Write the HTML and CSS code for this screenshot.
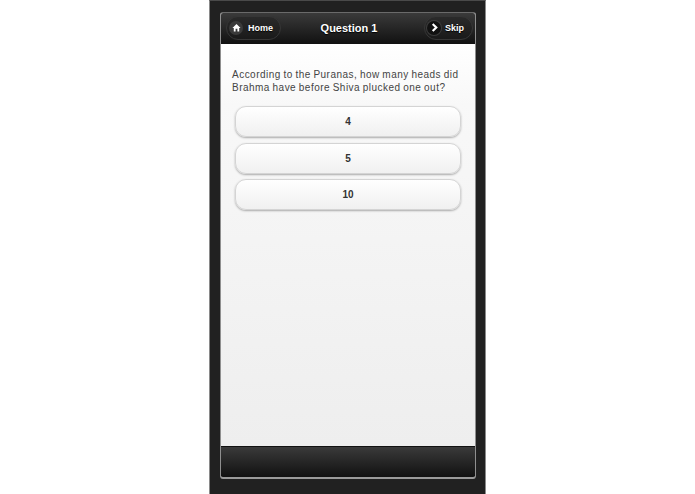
FILE: index.html
```html
<!DOCTYPE html>
<html lang="en">
<head>
<meta charset="utf-8">
<title>Question 1</title>
<link rel="stylesheet" href="styles.css">
</head>
<body>
<div class="device">
  <div class="screen">
    <header class="topbar">
      <a class="pill pill-home">
        <span class="pill-icon"><svg width="9" height="9" viewBox="0 0 10 10"><path d="M5 1 L9.5 5.5 H8 V9.5 H6 V6.5 H4 V9.5 H2 V5.5 H0.5 Z" fill="#fff"/></svg></span>
        <span>Home</span>
      </a>
      <h1 class="title">Question 1</h1>
      <a class="pill pill-skip">
        <span class="pill-icon pill-icon-dark"><svg width="9" height="9" viewBox="0 0 10 10"><path d="M3 1 L7 5 L3 9" fill="none" stroke="#fff" stroke-width="2.4"/></svg></span>
        <span>Skip</span>
      </a>
    </header>
    <main class="content">
      <p class="question">According to the Puranas, how many heads did Brahma have before Shiva plucked one out?</p>
      <div class="answers">
        <button class="answer">4</button>
        <button class="answer">5</button>
        <button class="answer">10</button>
      </div>
    </main>
    <footer class="bottombar"></footer>
  </div>
</div>
</body>
</html>
```
FILE: styles.css
```css
* { box-sizing: border-box; }
html, body { margin: 0; height: 100%; background: #fff; }
body { display: flex; justify-content: center; font-family: "Liberation Sans", Arial, sans-serif; overflow: hidden; }
.device {
  width: 277px; height: 494px;
  background: #212121;
  border-left: 1px solid #8a8a8a;
  border-right: 1px solid #8a8a8a;
  border-top: 1px solid #4a4a4a;
  padding: 11px 9px 15px 10px;
  display: flex;
}
.screen {
  flex: 1;
  display: flex; flex-direction: column;
  border: 1px solid #8f8f8f;
  border-top-color: #6a6a6a;
  border-bottom: 2px solid #9a9a9a;
  border-radius: 3px;
  overflow: hidden;
  background: #f0f0f0;
}
.topbar {
  height: 31px; flex: none;
  display: flex; align-items: center; justify-content: space-between;
  padding: 0 2px 2px 5px;
  background: linear-gradient(#3a3a3a, #111);
}
.pill {
  display: flex; align-items: center; gap: 5px;
  height: 24px;
  border-radius: 12px;
  background: linear-gradient(#2a2a2a, #1a1a1a);
  border: 1px solid #363636;
  color: #fff; font-size: 9px; font-weight: bold;
  text-shadow: 0 1px 1px #000;
}
.pill-home { width: 55px; padding-left: 2px; }
.pill-skip { width: 49px; padding-left: 2px; gap: 4px; }
.pill-icon {
  width: 14px; height: 14px; border-radius: 50%;
  background: #3a3a3a;
  display: flex; align-items: center; justify-content: center;
  flex: none;
}
.pill-icon-dark { background: #111; box-shadow: 0 0 0 1px #3c3c3c; }
.title { margin: 0 7px 0 0; color: #fff; font-size: 11px; font-weight: bold; text-shadow: 0 1px 1px #000; }
.content {
  flex: 1;
  padding: 24px 11px 0;
  background: linear-gradient(#fff, #f8f8f8 60px, #eee);
}
.question { margin: 0 0 12px; font-size: 10px; line-height: 13px; color: #444; letter-spacing: 0.48px; word-spacing: -0.6px; }
.answers { display: flex; flex-direction: column; gap: 5.5px; padding: 0 3px; }
.answer {
  height: 31px;
  border: 1px solid #d4d4d4;
  border-radius: 11px;
  background: linear-gradient(#fff, #f0f0f0);
  box-shadow: 0 1px 2px #aaa;
  font: bold 10px "Liberation Sans", Arial, sans-serif;
  color: #333;
}
.bottombar {
  height: 31px; flex: none;
  border-top: 1px solid #111;
  background: linear-gradient(#3a3a3a, #111);
}
```
